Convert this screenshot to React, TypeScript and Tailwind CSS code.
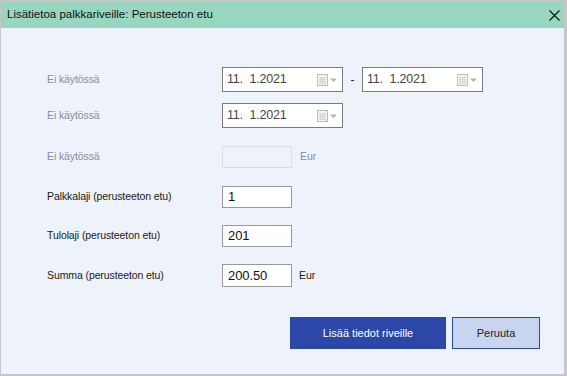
import React from "react";

const font = { fontFamily: '"Liberation Sans", Arial, sans-serif' };

function CalendarIcon() {
  return (
    <svg width="22" height="12" viewBox="0 0 22 12" className="shrink-0">
      <rect x="0.5" y="0.5" width="10" height="11" fill="#f4f4f4" stroke="#bdbdbd" />
      <path d="M2 3.5H9M2 5.5H9M2 7.5H9M2 9.5H9M3.5 3V10M5.5 3V10M7.5 3V10" stroke="#d8d8d8" strokeWidth="1" />
      <path d="M13 4.5H20L16.5 8Z" fill="#b4b4b4" />
    </svg>
  );
}

function DateInput() {
  return (
    <div className="flex h-[25px] w-[121px] items-center justify-between border border-[#7a7a7a] bg-white pl-[4px] pr-[3px]">
      <span className="text-[12.5px] tracking-[-0.2px] text-[#444]">11.&nbsp;&nbsp;1.2021</span>
      <CalendarIcon />
    </div>
  );
}

function TextInput({ value }: { value: string }) {
  return (
    <div className="flex h-[22px] w-[70px] items-center border border-[#9a9a9a] bg-white px-[5px] text-[13px] text-[#111]">
      {value}
    </div>
  );
}

export default function App() {
  return (
    <div className="h-[376px] w-[567px] bg-[#c6c6c6] pb-[2px] pl-[1px] pr-[3px] pt-[2px]" style={font}>
      <div className="flex h-full flex-col bg-[#eef2fa]">
        <div className="flex h-[26px] shrink-0 items-center justify-between bg-[#98d7bf] pl-[6px] pr-[4px]">
          <span className="text-[11.5px] text-[#111]">Lisätietoa palkkariveille: Perusteeton etu</span>
          <svg width="11" height="11" viewBox="0 0 11 11">
            <path d="M0.5 0.5L10.5 10.5M10.5 0.5L0.5 10.5" stroke="#111" strokeWidth="1.2" />
          </svg>
        </div>

        <div className="flex flex-col pl-[46px] pt-[39px] text-[10.5px] tracking-[-0.1px]">
          <div className="flex items-center">
            <span className="w-[175px] text-[#8a8c9c]">Ei käytössä</span>
            <DateInput />
            <span className="w-[19px] text-center text-[12px] text-[#222]">-</span>
            <DateInput />
          </div>

          <div className="mt-[11px] flex items-center">
            <span className="w-[175px] text-[#8a8c9c]">Ei käytössä</span>
            <DateInput />
          </div>

          <div className="mt-[18px] flex items-center">
            <span className="w-[175px] text-[#8a8c9c]">Ei käytössä</span>
            <div className="h-[22px] w-[70px] border border-[#d9dde6] bg-[#eef2fa]" />
            <span className="ml-[8px] text-[#8a8c9c]">Eur</span>
          </div>

          <div className="mt-[18px] flex items-center">
            <span className="w-[175px] text-[#1a1a1a]">Palkkalaji (perusteeton etu)</span>
            <TextInput value="1" />
          </div>

          <div className="mt-[17px] flex items-center">
            <span className="w-[175px] text-[#1a1a1a]">Tulolaji (perusteeton etu)</span>
            <TextInput value="201" />
          </div>

          <div className="mt-[17px] flex items-center">
            <span className="w-[175px] text-[#1a1a1a]">Summa (perusteeton etu)</span>
            <div className="flex h-[23px] w-[70px] items-center border border-[#9a9a9a] bg-white px-[5px] text-[13px] text-[#111]">
              200.50
            </div>
            <span className="ml-[7px] text-[#1a1a1a]">Eur</span>
          </div>
        </div>

        <div className="mt-[30px] flex justify-end gap-[6px] pr-[24px]">
          <button className="h-[32px] w-[156px] bg-[#2b47a8] text-[11px] text-white">Lisää tiedot riveille</button>
          <button className="h-[32px] w-[88px] border border-[#2b47a8] bg-[#c9d5ef] text-[11px] text-[#222]">Peruuta</button>
        </div>
      </div>
    </div>
  );
}
